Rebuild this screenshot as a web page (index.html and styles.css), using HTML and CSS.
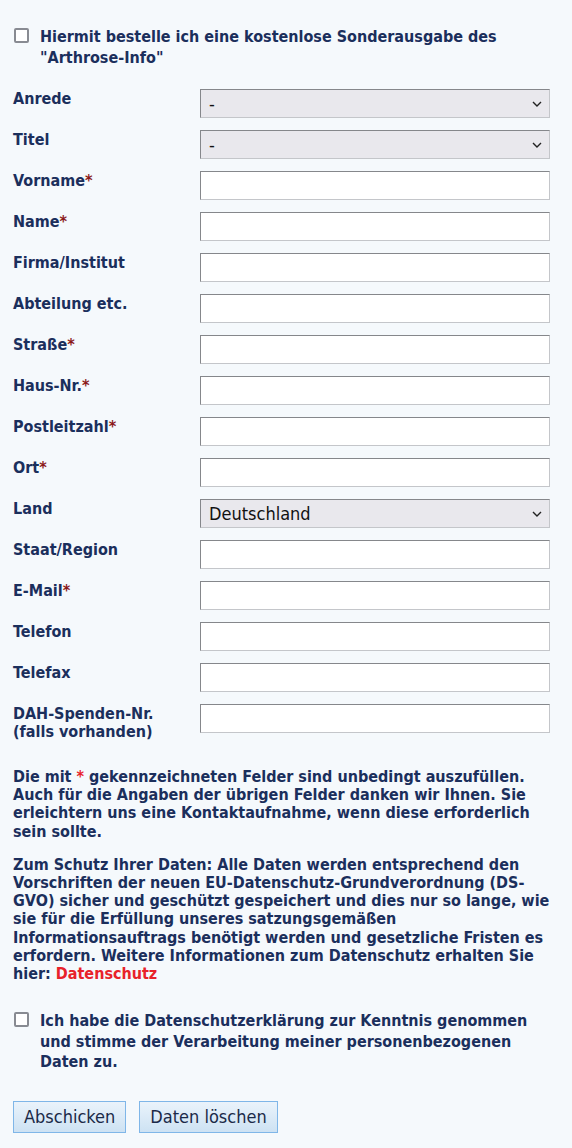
FILE: index.html
```html
<!DOCTYPE html>
<html lang="de">
<head>
<meta charset="utf-8">
<title>Bestellung Arthrose-Info</title>
<link rel="stylesheet" href="styles.css">
</head>
<body>
<form class="order-form">
  <label class="check-row check-top">
    <input type="checkbox" class="cb">
    <span>Hiermit bestelle ich eine kostenlose Sonderausgabe des "Arthrose-Info"</span>
  </label>

  <div class="fields">
    <div class="field-label">Anrede</div>
    <div class="select"><span>-</span><svg class="chev" width="10" height="6" viewBox="0 0 10 6"><path d="M1 1l4 4 4-4" fill="none" stroke="#222" stroke-width="1.4"/></svg></div>

    <div class="field-label">Titel</div>
    <div class="select"><span>-</span><svg class="chev" width="10" height="6" viewBox="0 0 10 6"><path d="M1 1l4 4 4-4" fill="none" stroke="#222" stroke-width="1.4"/></svg></div>

    <div class="field-label">Vorname<span class="req">*</span></div>
    <div class="input"></div>

    <div class="field-label">Name<span class="req">*</span></div>
    <div class="input"></div>

    <div class="field-label">Firma/Institut</div>
    <div class="input"></div>

    <div class="field-label">Abteilung etc.</div>
    <div class="input"></div>

    <div class="field-label">Straße<span class="req">*</span></div>
    <div class="input"></div>

    <div class="field-label">Haus-Nr.<span class="req">*</span></div>
    <div class="input"></div>

    <div class="field-label">Postleitzahl<span class="req">*</span></div>
    <div class="input"></div>

    <div class="field-label">Ort<span class="req">*</span></div>
    <div class="input"></div>

    <div class="field-label">Land</div>
    <div class="select"><span class="sel-text">Deutschland</span><svg class="chev" width="10" height="6" viewBox="0 0 10 6"><path d="M1 1l4 4 4-4" fill="none" stroke="#222" stroke-width="1.4"/></svg></div>

    <div class="field-label">Staat/Region</div>
    <div class="input"></div>

    <div class="field-label">E-Mail<span class="req">*</span></div>
    <div class="input"></div>

    <div class="field-label">Telefon</div>
    <div class="input"></div>

    <div class="field-label">Telefax</div>
    <div class="input"></div>

    <div class="field-label">DAH-Spenden-Nr.<br>(falls vorhanden)</div>
    <div class="input"></div>
  </div>

  <p class="note">Die mit <span class="req-red">*</span> gekennzeichneten Felder sind unbedingt auszufüllen. Auch für die Angaben der übrigen Felder danken wir Ihnen. Sie erleichtern uns eine Kontaktaufnahme, wenn diese erforderlich sein sollte.</p>

  <p class="note note-wide">Zum Schutz Ihrer Daten: Alle Daten werden entsprechend den Vorschriften der neuen EU-Datenschutz-Grundverordnung (DS-GVO) sicher und geschützt gespeichert und dies nur so lange, wie sie für die Erfüllung unseres satzungsgemäßen Informationsauftrags benötigt werden und gesetzliche Fristen es erfordern. Weitere Informationen zum Datenschutz erhalten Sie hier: <a class="link" href="#">Datenschutz</a></p>

  <label class="check-row check-bottom">
    <input type="checkbox" class="cb">
    <span>Ich habe die Datenschutzerklärung zur Kenntnis genommen und stimme der Verarbeitung meiner personenbezogenen Daten zu.</span>
  </label>

  <div class="buttons">
    <button type="button" class="btn">Abschicken</button>
    <button type="button" class="btn">Daten löschen</button>
  </div>
</form>
</body>
</html>
```
FILE: styles.css
```css
html, body {
  margin: 0;
  padding: 0;
  background: #f5f9fc;
}

body {
  font-family: "DejaVu Sans Condensed", "DejaVu Sans", sans-serif;
  color: #1b2f5c;
}

.order-form {
  width: 545px;
  padding: 27px 0 0 13px;
}

.check-row {
  display: flex;
  align-items: flex-start;
  gap: 11px;
  font-weight: bold;
  font-size: 16px;
  line-height: 20.5px;
}

.check-top {
  width: 500px;
}

.cb {
  appearance: none;
  -webkit-appearance: none;
  flex: none;
  width: 15px;
  height: 15px;
  margin: 1px 0 0 1px;
  border: 2px solid #888b92;
  border-radius: 2px;
  background: #fff;
  box-sizing: border-box;
}

.fields {
  margin-top: 21px;
  display: grid;
  grid-template-columns: 187px 350px;
  grid-auto-rows: 29px;
  row-gap: 12px;
}

.field-label {
  font-weight: bold;
  font-size: 16px;
  line-height: 18px;
  padding-top: 1px;
  white-space: nowrap;
}

.req {
  color: #8b1a1a;
}

.req-red {
  color: #e8222a;
}

.input,
.select {
  box-sizing: border-box;
  height: 29px;
  border: 1px solid #c4c6ca;
  border-top-color: #85878b;
  border-left-color: #85878b;
  background: #fff;
}

.select {
  background: #e9e8ed;
  display: flex;
  align-items: center;
  justify-content: space-between;
  padding: 0 7px 0 8px;
  font-size: 18px;
  color: #111;
  font-weight: normal;
}

.sel-text {
  font-size: 18px;
  color: #111;
}

.note {
  font-weight: bold;
  font-size: 16px;
  line-height: 18.2px;
  margin: 35px 0 0 0;
  width: 530px;
}

.note-wide {
  width: 542px;
}

.note + .note {
  margin-top: 15px;
}

.link {
  color: #e8222a;
  text-decoration: none;
}

.check-bottom {
  margin-top: 28px;
  width: 530px;
}

.buttons {
  display: flex;
  gap: 13px;
  margin-top: 28px;
}

.btn {
  font-family: "DejaVu Sans Condensed", "DejaVu Sans", sans-serif;
  font-size: 18px;
  color: #1b2a48;
  height: 32px;
  padding: 0 10px;
  border: 1px solid #7fb6e8;
  background: linear-gradient(#eaf3fb, #cde2f3);
  border-radius: 0;
}
```
